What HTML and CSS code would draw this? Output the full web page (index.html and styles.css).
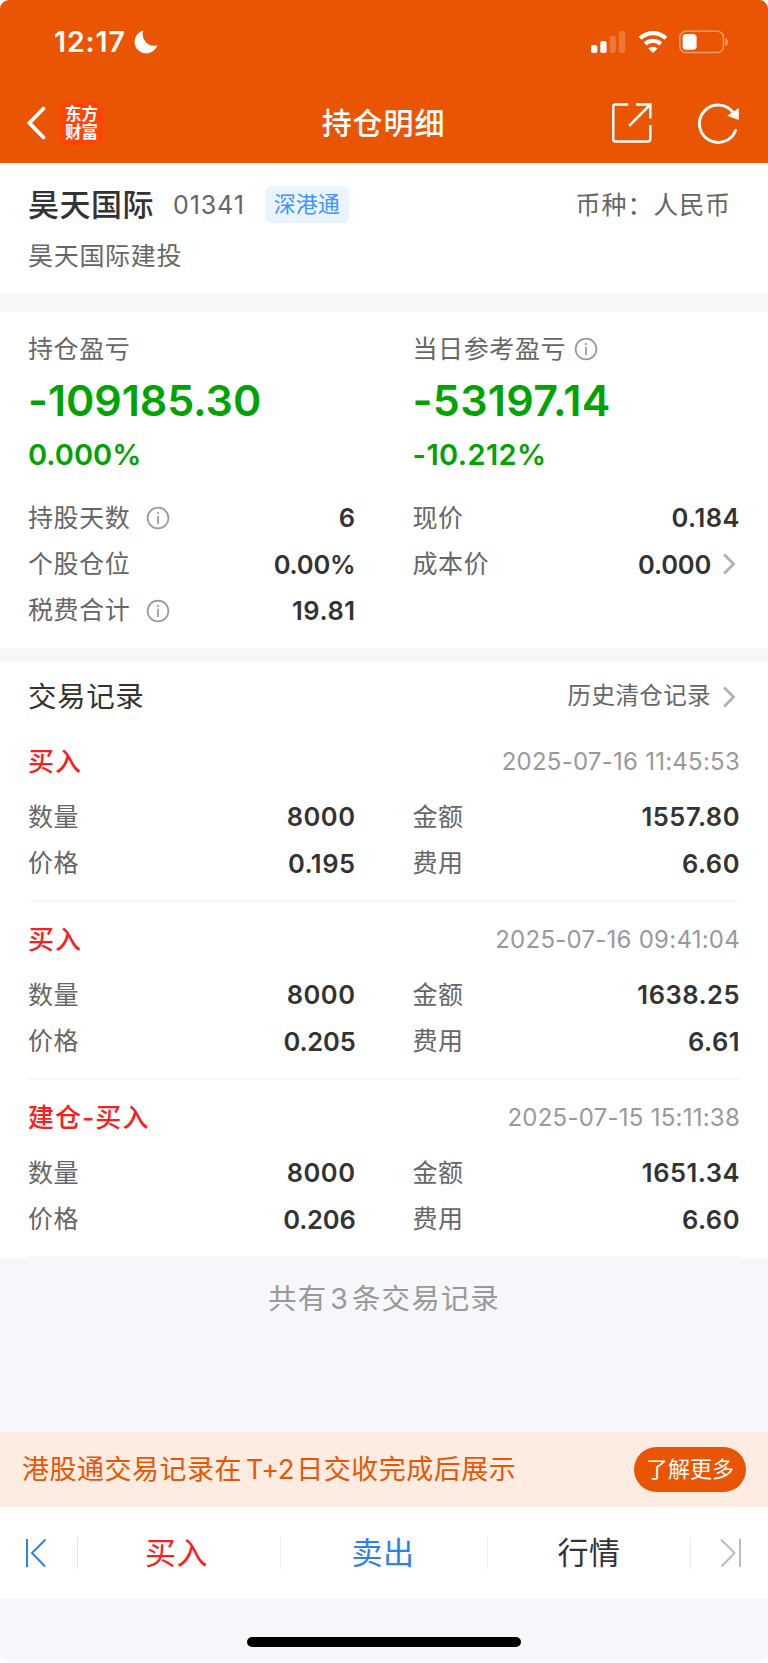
FILE: index.html
```html
<!DOCTYPE html>
<html lang="zh-CN">
<head>
  <meta charset="UTF-8">
  <meta name="viewport" content="width=device-width, initial-scale=1.0">
  <title>持仓明细</title>
  <link rel="stylesheet" href="styles.css">
</head>
<body>
  <div class="page">
    <header class="header">
      <div class="status-bar">
        <span class="time">12:17</span>
        <svg class="moon" width="24" height="24" viewBox="0 0 24 24"><path d="M9.3 0.6A11.6 11.6 0 1 0 23.3 15.2A11.4 11.4 0 0 1 9.3 0.6Z" fill="#fff"/></svg>
        <div class="status-icons">
          <svg width="35" height="22" viewBox="0 0 35 22" fill="#fff">
            <rect x="0" y="14" width="6.3" height="8" rx="1.8"/>
            <rect x="9.3" y="10" width="6.3" height="12" rx="1.8"/>
            <rect x="18.6" y="5" width="6.3" height="17" rx="1.8" opacity="0.2"/>
            <rect x="27.9" y="0" width="6.3" height="22" rx="1.8" opacity="0.2"/>
          </svg>
          <svg class="wifi" width="30" height="22" viewBox="0 0 30 22">
            <path d="M2.2 7.3A18.5 18.5 0 0 1 27.8 7.3" fill="none" stroke="#fff" stroke-width="4.3"/>
            <path d="M7.2 13A11.2 11.2 0 0 1 22.8 13" fill="none" stroke="#fff" stroke-width="4"/>
            <path d="M10.4 17.6A6.8 6.8 0 0 1 19.6 17.6L15 22Z" fill="#fff"/>
          </svg>
          <svg width="50" height="24" viewBox="0 0 50 24">
            <rect x="0.8" y="1.3" width="43.6" height="21.2" rx="6" fill="none" stroke="#fff" stroke-opacity="0.42" stroke-width="1.5"/>
            <rect x="3.6" y="4" width="14" height="15.8" rx="3.6" fill="#fff"/>
            <path d="M46.4 8C49.6 9 49.6 15 46.4 16Z" fill="#fff" fill-opacity="0.5"/>
          </svg>
        </div>
      </div>
      <div class="nav">
        <div class="nav-side">
          <svg width="20" height="34" viewBox="0 0 20 34"><path d="M16.5 2.5L2.5 17L16.5 31.5" fill="none" stroke="#fff" stroke-width="3.8" stroke-linecap="round"/></svg>
          <div class="logo"><span>东方</span><span>财富</span></div>
        </div>
        <h1>持仓明细</h1>
        <div class="nav-side nav-actions">
          <svg width="40" height="40" viewBox="0 0 40 40" fill="none" stroke="#fff" stroke-width="2.5">
            <path d="M16.3 1.5H3.5Q1.2 1.5 1.2 3.8V36Q1.2 38.4 3.5 38.4H36Q38.3 38.4 38.3 36V22"/>
            <path d="M24 1.5H38.3V15.6M38.3 1.5L17.2 22.9"/>
          </svg>
          <svg width="42" height="42" viewBox="0 0 42 42">
            <path d="M37.6 28.4A18.7 18.7 0 1 1 35.6 11.2" fill="none" stroke="#fff" stroke-width="2.9" stroke-linecap="round"/>
            <path d="M40.8 6V18L29.2 13.8Z" fill="#fff"/>
          </svg>
        </div>
      </div>
    </header>

    <section class="stock">
      <div class="stock-row">
        <h2>昊天国际</h2>
        <span class="code">01341</span>
        <span class="tag">深港通</span>
        <span class="currency">币种：人民币</span>
      </div>
      <div class="full-name">昊天国际建投</div>
    </section>

    <section class="summary">
      <div class="columns">
        <div class="profit">
          <div class="label">持仓盈亏</div>
          <div class="amount">-109185.30</div>
          <div class="percent">0.000%</div>
        </div>
        <div class="profit">
          <div class="label">当日参考盈亏
            <svg class="info near" viewBox="0 0 24 24"><circle cx="12" cy="12" r="10.4"/><path d="M12 9.8V18M12 6V8.1"/></svg>
          </div>
          <div class="amount day">-53197.14</div>
          <div class="percent day">-10.212%</div>
        </div>
      </div>
      <div class="columns">
        <div>
          <div class="item">
            <span class="label">持股天数 <svg class="info" viewBox="0 0 24 24"><circle cx="12" cy="12" r="10.4"/><path d="M12 9.8V18M12 6V8.1"/></svg></span>
            <b>6</b>
          </div>
          <div class="item"><span class="label">个股仓位</span><b class="tight">0.00%</b></div>
          <div class="item">
            <span class="label">税费合计 <svg class="info" viewBox="0 0 24 24"><circle cx="12" cy="12" r="10.4"/><path d="M12 9.8V18M12 6V8.1"/></svg></span>
            <b>19.81</b>
          </div>
        </div>
        <div>
          <div class="item"><span class="label">现价</span><b>0.184</b></div>
          <div class="item">
            <span class="label">成本价</span>
            <b class="tight">0.000</b>
            <svg class="arrow" viewBox="0 0 12 22"><path d="M1.2 1.5L10.6 11L1.2 20.5"/></svg>
          </div>
        </div>
      </div>
    </section>

    <section class="records">
      <div class="records-head">
        <h3>交易记录</h3>
        <span class="history">历史清仓记录</span>
        <svg class="arrow" viewBox="0 0 12 22"><path d="M1.2 1.5L10.6 11L1.2 20.5"/></svg>
      </div>
      <div class="record">
        <div class="record-title"><strong>买入</strong><time>2025-07-16 11:45:53</time></div>
        <div class="columns">
          <div class="item"><span class="label">数量</span><b>8000</b></div>
          <div class="item"><span class="label">金额</span><b>1557.80</b></div>
          <div class="item"><span class="label">价格</span><b>0.195</b></div>
          <div class="item"><span class="label">费用</span><b>6.60</b></div>
        </div>
      </div>
      <div class="record">
        <div class="record-title"><strong>买入</strong><time>2025-07-16 09:41:04</time></div>
        <div class="columns">
          <div class="item"><span class="label">数量</span><b>8000</b></div>
          <div class="item"><span class="label">金额</span><b>1638.25</b></div>
          <div class="item"><span class="label">价格</span><b class="tight">0.205</b></div>
          <div class="item"><span class="label">费用</span><b>6.61</b></div>
        </div>
      </div>
      <div class="record">
        <div class="record-title"><strong>建仓-买入</strong><time>2025-07-15 15:11:38</time></div>
        <div class="columns">
          <div class="item"><span class="label">数量</span><b>8000</b></div>
          <div class="item"><span class="label">金额</span><b>1651.34</b></div>
          <div class="item"><span class="label">价格</span><b class="tight">0.206</b></div>
          <div class="item"><span class="label">费用</span><b>6.60</b></div>
        </div>
      </div>
    </section>

    <div class="total">共有<span>3</span>条交易记录</div>

    <div class="notice">
      <span class="notice-text">港股通交易记录在<span class="latin">T+2</span>日交收完成后展示</span>
      <a class="more">了解更多</a>
    </div>

    <nav class="tabs">
      <a class="tab-end first">
        <svg width="22" height="30" viewBox="0 0 22 30"><path d="M2 1V29M20.5 1.5L7 15L20 28.5"/></svg>
      </a>
      <a class="tab buy">买入</a>
      <a class="tab sell">卖出</a>
      <a class="tab">行情</a>
      <a class="tab-end last">
        <svg width="22" height="30" viewBox="0 0 22 30"><path d="M20 1V29M1 1.5L14.5 15L1.5 28.5"/></svg>
      </a>
    </nav>
    <div class="home"><span></span></div>
  </div>
</body>
</html>
```
FILE: styles.css
```css
* {
  box-sizing: border-box;
}

body {
  margin: 0;
  background-color: #fff;
  font-family: Inter, "Noto Sans CJK SC", sans-serif;
  line-height: 1.4;
  color: #333;
}

h1, h2, h3 {
  margin: 0;
}

svg {
  display: block;
  flex-shrink: 0;
}

.page {
  display: flex;
  flex-direction: column;
  width: 768px;
  height: 1662px;
  background-color: #f6f7fa;
  border-radius: 9px;
  overflow: hidden;
}

/* header */
.header {
  height: 163px;
  background-color: #ea5504;
  color: #fff;
}

.status-bar {
  display: flex;
  align-items: center;
  height: 84px;
  padding: 0 39px 0 54px;
}

.time {
  font-size: 28.5px;
  font-weight: 600;
  line-height: 34px;
  letter-spacing: 0.9px;
  width: 71px;
  white-space: nowrap;
}

.moon {
  margin-left: 9px;
}

.status-icons {
  display: flex;
  align-items: center;
  margin-left: auto;
}

.wifi {
  margin: 0 11px 0 12px;
}

.nav {
  display: flex;
  align-items: center;
  justify-content: space-between;
  height: 78px;
  padding: 0 28px 0 27px;
}

.nav-side {
  display: flex;
  align-items: center;
  width: 180px;
}

.nav-actions {
  justify-content: flex-end;
  gap: 46px;
}

.logo {
  display: flex;
  flex-direction: column;
  align-items: center;
  justify-content: center;
  width: 43px;
  height: 43px;
  margin-left: 13px;
  padding-bottom: 1px;
  background-color: #ff4406;
  border-radius: 9px;
  font-size: 16.5px;
  font-weight: 700;
  line-height: 18px;
}

.nav h1 {
  font-size: 30px;
  font-weight: 500;
  line-height: 40px;
  letter-spacing: 0.9px;
}

/* stock name */
.stock {
  height: 130px;
  padding: 19px 37px 0 28px;
  background-color: #fff;
}

.stock-row {
  display: flex;
  align-items: center;
  height: 46px;
}

.stock h2 {
  font-size: 31px;
  font-weight: 500;
  letter-spacing: 0.5px;
}

.code {
  margin: 0 20px 0 19px;
  font-size: 25px;
  letter-spacing: 0.9px;
  color: #666;
}

.tag {
  width: 84px;
  height: 37px;
  margin-bottom: 1px;
  line-height: 37px;
  text-align: center;
  background-color: #ebf3ff;
  border-radius: 7px;
  font-size: 22px;
  color: #3d96ff;
}

.currency {
  margin-left: auto;
  font-size: 25px;
  letter-spacing: 0.9px;
  color: #666;
}

.full-name {
  height: 46px;
  line-height: 46px;
  margin-top: 5px;
  font-size: 25px;
  letter-spacing: 0.7px;
  color: #666;
}

/* profit summary */
.summary {
  height: 336px;
  margin-top: 19px;
  padding: 14px 28px 0 28px;
  background-color: #fff;
}

.columns {
  display: grid;
  grid-template-columns: 1fr 1fr;
  column-gap: 57px;
}

.label {
  display: flex;
  align-items: center;
  height: 46px;
  font-size: 25px;
  letter-spacing: 0.6px;
  color: #666;
}

.info {
  width: 24px;
  height: 24px;
  margin-left: 16px;
  fill: none;
  stroke: #999;
  stroke-width: 1.7;
}

.info.near {
  margin-left: 8px;
}

.profit {
  height: 169px;
  color: #00a300;
}

.amount {
  height: 58px;
  line-height: 57px;
  font-size: 43px;
  font-weight: 600;
  letter-spacing: -0.1px;
}

.amount.day {
  letter-spacing: 0.3px;
}

.percent {
  height: 50px;
  line-height: 50px;
  font-size: 29px;
  font-weight: 600;
}

.percent.day {
  letter-spacing: 0.4px;
}

.item {
  display: flex;
  align-items: center;
  justify-content: space-between;
  height: 46.3px;
}

.item b {
  font-size: 25.5px;
  font-weight: 600;
  letter-spacing: 0.5px;
  margin-left: auto;
}

.item b.tight {
  letter-spacing: -0.2px;
}

.arrow {
  width: 12px;
  height: 22px;
  margin: 0 5px 0 12px;
  fill: none;
  stroke: #b0b0b0;
  stroke-width: 2.6;
}

/* trade records */
.records {
  height: 596px;
  margin-top: 14px;
  padding: 0 28px;
  background-color: #fff;
}

.records-head {
  display: flex;
  align-items: center;
  height: 69px;
}

.records h3 {
  font-size: 28.5px;
  font-weight: 400;
  letter-spacing: 0.6px;
}

.history {
  margin-left: auto;
  font-size: 23.5px;
  letter-spacing: 0.4px;
  color: #666;
}

.record {
  height: 171px;
  border-bottom: 2px solid #f6f7fa;
}

.record + .record {
  height: 178px;
  padding-top: 7px;
}

.record-title {
  display: flex;
  align-items: center;
  justify-content: space-between;
  height: 62px;
  margin-bottom: 1px;
}

.record-title strong {
  font-size: 26px;
  font-weight: 500;
  letter-spacing: 1.1px;
  color: #fa1e1e;
}

.record-title time {
  font-size: 24px;
  letter-spacing: 0.25px;
  color: #999;
}

.total {
  height: 174px;
  padding-top: 21px;
  text-align: center;
  font-size: 28.5px;
  line-height: 40px;
  letter-spacing: 1.1px;
  color: #999;
}

.total span {
  margin: 0 3px;
}

/* bottom notice and tabs */
.notice {
  display: flex;
  align-items: center;
  justify-content: space-between;
  height: 75px;
  padding: 0 22px;
  background-color: #fcece2;
  color: #ea5504;
}

.notice-text {
  font-size: 27px;
  letter-spacing: 0.5px;
  white-space: nowrap;
}

.latin {
  margin: 0 2px 0 4px;
  letter-spacing: -0.2px;
}

.more {
  width: 112px;
  height: 45px;
  line-height: 45px;
  text-align: center;
  background-color: #ea5504;
  border-radius: 23px;
  font-size: 22px;
  color: #fff;
}

.tabs {
  display: flex;
  align-items: center;
  height: 92px;
  background-color: #fff;
}

.tab {
  width: 203px;
  height: 32px;
  line-height: 32px;
  border-right: 1px solid #ececec;
  text-align: center;
  font-size: 31px;
  letter-spacing: 0.5px;
}

.buy {
  padding-right: 5px;
  color: #fa1e1e;
}

.sell {
  width: 207px;
  padding-right: 2px;
  color: #2f80e7;
}

.tab-end {
  display: flex;
  align-items: center;
  width: 77px;
  height: 32px;
}

.tab-end svg {
  fill: none;
  stroke-width: 2;
}

.first {
  width: 78px;
  padding-left: 25px;
  border-right: 1px solid #e4e4e4;
  stroke: #2f80e7;
}

.last {
  padding-left: 29px;
  stroke: #bbb;
}

.home {
  display: flex;
  justify-content: center;
  padding-top: 38px;
}

.home span {
  width: 274px;
  height: 10px;
  background-color: #000;
  border-radius: 5px;
}
```
